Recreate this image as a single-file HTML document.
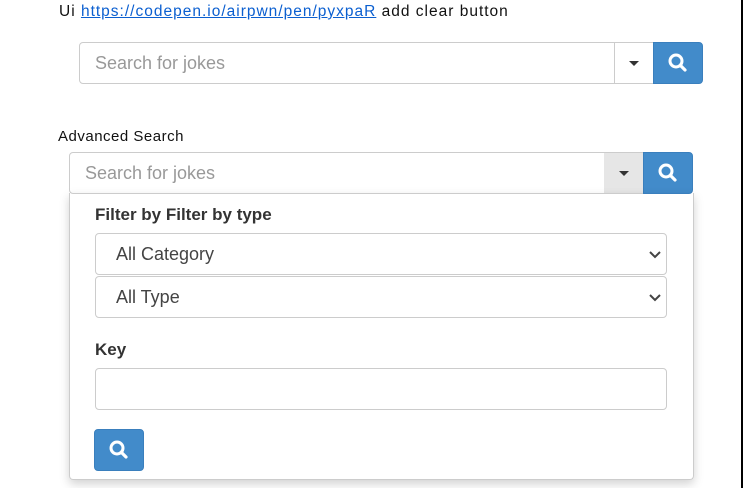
<!DOCTYPE html>
<html><head><meta charset="utf-8"><style>
*{box-sizing:border-box}
body{margin:0;width:744px;height:488px;background:#fff;position:relative;overflow:hidden;font-family:"Liberation Sans",sans-serif}
.a{position:absolute}
.t{font-family:"Liberation Sans",sans-serif;font-size:15px;color:#111}
a{color:#0b5fd0}
.inp{border:1px solid #ccc;background:#fff;border-radius:4px 0 0 4px;font-size:18px;color:#999;padding-left:15px;display:flex;align-items:center}
.car{border:1px solid #ccc;border-left:none;display:flex;align-items:center;justify-content:center}
.car:after{content:"";border-left:5px solid transparent;border-right:5px solid transparent;border-top:5px solid #333}
.btn{background:#428bca;border:1px solid #3a7fbd;display:flex;align-items:center;justify-content:center}
.sel{border:1px solid #ccc;border-radius:4px;font-size:18px;color:#444;padding-left:20px;display:flex;align-items:center}
.lbl{font-weight:bold;font-size:17px;color:#333}
</style></head><body>
<div class="a t" style="left:59px;top:3px;font-size:15.5px;letter-spacing:1px">Ui <a href="#">https://codepen.io/airpwn/pen/pyxpaR</a> add clear button</div>
<div class="a inp" style="left:79px;top:42px;width:536px;height:42px">Search for jokes</div>
<div class="a car" style="left:614px;top:42px;width:40px;height:42px"></div>
<div class="a btn" style="left:653px;top:42px;width:50px;height:42px;border-radius:0 4px 4px 0"><svg width="22" height="22" viewBox="0 0 22 22"><circle cx="9" cy="9" r="6" fill="none" stroke="#fff" stroke-width="3"/><path d="M13.5 13.5L18 18" stroke="#fff" stroke-width="3.2" stroke-linecap="round"/></svg></div>
<div class="a t" style="left:58px;top:128px;letter-spacing:0.5px">Advanced Search</div>
<div class="a inp" style="left:69px;top:152px;width:536px;height:42px">Search for jokes</div>
<div class="a car" style="left:604px;top:152px;width:40px;height:42px;background:#e6e6e6"></div>
<div class="a btn" style="left:643px;top:152px;width:50px;height:42px;border-radius:0 4px 4px 0"><svg width="22" height="22" viewBox="0 0 22 22"><circle cx="9" cy="9" r="6" fill="none" stroke="#fff" stroke-width="3"/><path d="M13.5 13.5L18 18" stroke="#fff" stroke-width="3.2" stroke-linecap="round"/></svg></div>
<div class="a" style="left:69px;top:193px;width:625px;height:287px;border:1px solid #ccc;border-top:none;border-radius:0 0 4px 4px;box-shadow:0 4px 10px rgba(0,0,0,.18)"></div>
<div class="a lbl" style="left:95px;top:205px">Filter by Filter by type</div>
<div class="a sel" style="left:95px;top:233px;width:572px;height:42px">All Category</div>
<div class="a sel" style="left:95px;top:276px;width:572px;height:42px">All Type</div>
<svg class="a" style="left:648px;top:248px" width="14" height="60"><path d="M2 4l5 5 5-5M2 47l5 5 5-5" fill="none" stroke="#444" stroke-width="2"/></svg>
<div class="a lbl" style="left:95px;top:340px">Key</div>
<div class="a" style="left:95px;top:368px;width:572px;height:42px;border:1px solid #ccc;border-radius:4px"></div>
<div class="a btn" style="left:94px;top:429px;width:50px;height:42px;border-radius:4px"><svg width="22" height="22" viewBox="0 0 22 22"><circle cx="9" cy="9" r="6" fill="none" stroke="#fff" stroke-width="3"/><path d="M13.5 13.5L18 18" stroke="#fff" stroke-width="3.2" stroke-linecap="round"/></svg></div>
<div class="a" style="left:741px;top:0;width:2px;height:488px;background:#000"></div>
</body></html>
